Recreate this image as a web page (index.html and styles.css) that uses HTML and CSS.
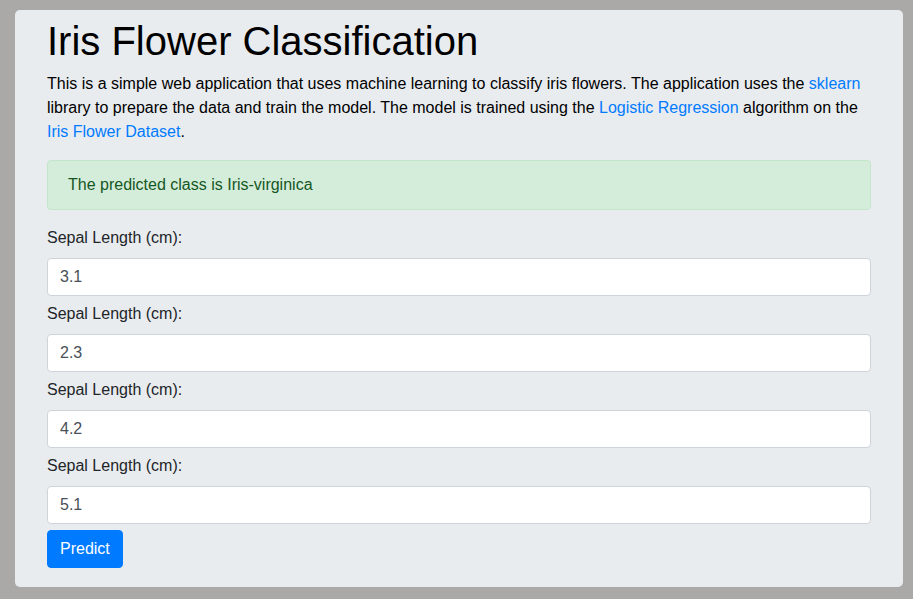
FILE: index.html
```html
<!DOCTYPE html>
<html>
<head>
<meta charset="utf-8">
<link rel="stylesheet" href="styles.css">
</head>
<body>
<div class="card">
  <h1 class="title">Iris Flower Classification</h1>
  <p class="lead">This is a simple web application that uses machine learning to classify iris flowers. The application uses the <a href="#">sklearn</a> library to prepare the data and train the model. The model is trained using the <a href="#">Logistic Regression</a> algorithm on the <a href="#">Iris Flower Dataset</a>.</p>
  <div class="alert">The predicted class is Iris-virginica</div>
  <form class="form">
    <label class="label">Sepal Length (cm):</label>
    <input class="input" type="text" value="3.1">
    <label class="label">Sepal Length (cm):</label>
    <input class="input" type="text" value="2.3">
    <label class="label">Sepal Length (cm):</label>
    <input class="input" type="text" value="4.2">
    <label class="label">Sepal Length (cm):</label>
    <input class="input" type="text" value="5.1">
    <button class="btn" type="button">Predict</button>
  </form>
</div>
</body>
</html>
```
FILE: styles.css
```css
html, body {
  margin: 0;
  padding: 0;
  background: #aaa9a7;
  font-family: "Liberation Sans", Arial, sans-serif;
  font-size: 16px;
  line-height: 1.5;
  color: #212529;
}
.card {
  margin: 10px 10px 0 15px;
  padding: 7px 32px 19px 32px;
  background: #e9ecef;
  border-radius: 5px;
}
.title {
  margin: 0 0 7px 0;
  font-size: 40px;
  font-weight: 400;
  line-height: 1.2;
  color: #000;
}
.lead {
  margin: 0 0 16px 0;
  color: #000;
}
.lead a {
  color: #007bff;
  text-decoration: none;
}
.alert {
  margin-bottom: 16px;
  padding: 12px 20px;
  background: #d4edda;
  border: 1px solid #c3e6cb;
  border-radius: 4px;
  color: #155724;
}
.form {
  display: flex;
  flex-direction: column;
  align-items: flex-start;
}
.label {
  display: block;
  margin-bottom: 8px;
  color: #212529;
}
.input {
  box-sizing: border-box;
  width: 100%;
  height: 38px;
  margin: 0 0 6px 0;
  padding: 6px 12px;
  font-family: inherit;
  font-size: 16px;
  line-height: 1.5;
  color: #495057;
  background: #fff;
  border: 1px solid #ced4da;
  border-radius: 4px;
}
.btn {
  box-sizing: border-box;
  height: 38px;
  padding: 6px 12px;
  font-family: inherit;
  font-size: 16px;
  line-height: 1.5;
  color: #fff;
  background: #007bff;
  border: 1px solid #007bff;
  border-radius: 4px;
}
```
